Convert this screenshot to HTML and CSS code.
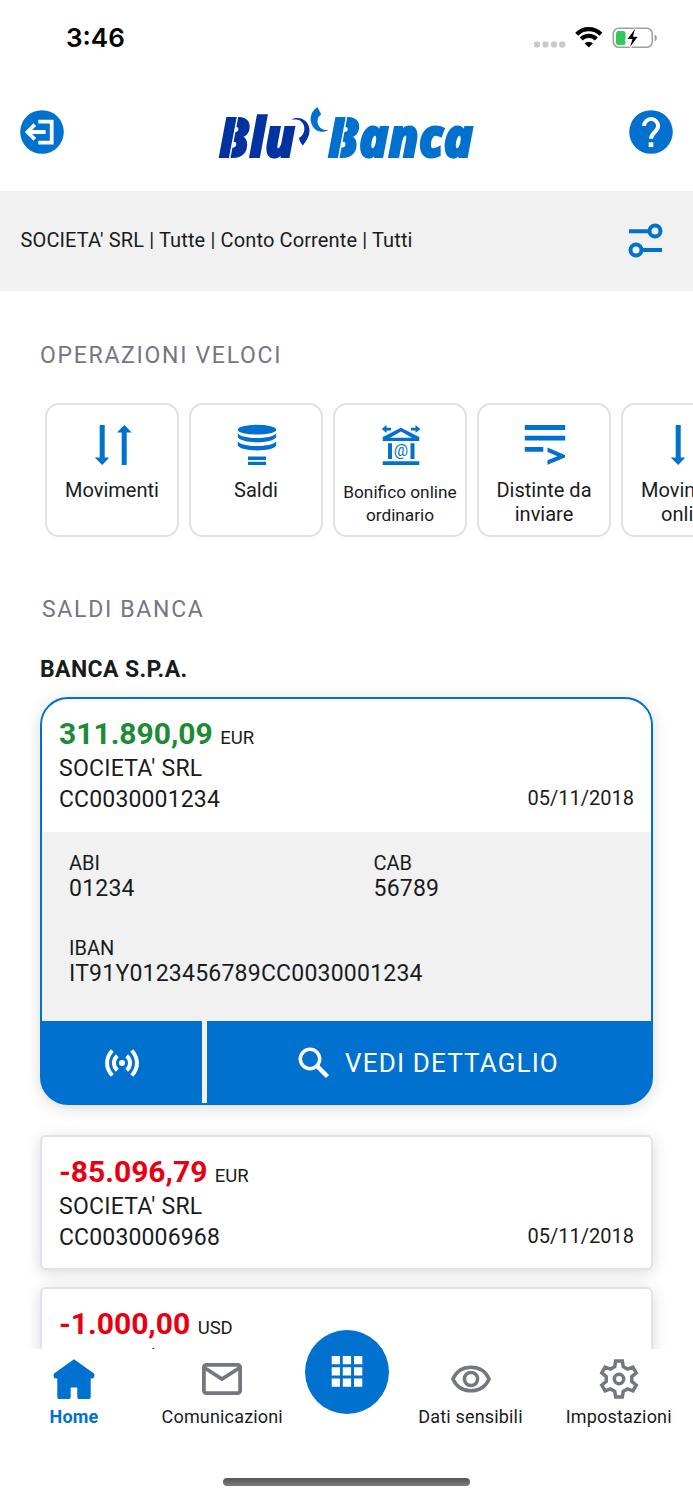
FILE: index.html
```html
<!DOCTYPE html>
<html lang="it">
<head>
  <meta charset="UTF-8" />
  <title>Blu Banca</title>
  <link rel="stylesheet" href="styles.css">
</head>
<body>
  <div class="status-bar">
    <span class="time">3:46</span>
    <svg class="status-icons" width="124" height="24" viewBox="0 0 124 24">
      <g fill="#c8c8c8">
        <rect x="0" y="15.5" width="6" height="6" rx="2" />
        <rect x="8.5" y="15.5" width="6" height="6" rx="2" />
        <rect x="17" y="15.5" width="6" height="6" rx="2" />
        <rect x="25.3" y="15.5" width="6" height="6" rx="2" />
      </g>
      <g fill="none" stroke="#000" stroke-width="4.3">
        <path d="M42.700 8.200a17.200 17.200 0 0 1 24.200 0" />
        <path d="M47.300 13a10.600 10.600 0 0 1 15 0" />
      </g>
      <path d="M50.600 17.200a6.400 6.400 0 0 1 8.400 0L54.800 21.500z" />
      <rect x="79.3" y="2.3" width="39" height="19" rx="5.5" fill="none" stroke="#a0a0a0" stroke-width="1.6" />
      <path d="M120.600 8.500c3 1.300 3 5.700 0 7z" fill="#a0a0a0" />
      <rect x="82" y="5" width="9.500" height="14" rx="2.500" fill="#34c759" />
      <path d="M101 3L93.500 13h5L96 21 103.600 10.700h-4.700z" stroke="#fff" stroke-width="3" />
      <path d="M101 3L93.500 13h5L96 21 103.600 10.700h-4.700z" />
    </svg>
  </div>

  <header>
    <svg width="44" height="44" viewBox="0 0 44 44">
      <circle cx="22" cy="22" r="21.800" fill="#0071ce" />
      <g fill="none" stroke="#fff" stroke-width="3.800">
        <path d="M18.300 11.600h13.400v21H18.300" />
        <path d="M25.600 22H7.500M14.800 14.700L7.500 22l7.300 7.300" />
      </g>
    </svg>
    <svg class="logo" width="260" height="80" viewBox="0 -10 260 80">
      <g font-size="54" stroke-width="2">
        <text x="2" y="51.500" textLength="76" lengthAdjust="spacingAndGlyphs" fill="#0033a0" stroke="#0033a0">Blu</text>
        <text x="111" y="51.500" textLength="145" lengthAdjust="spacingAndGlyphs" fill="#0071ce" stroke="#0071ce">Banca</text>
      </g>
      <!-- stencil cuts -->
      <path d="M20.500 12L12.500 54M129.500 12L121.500 54" stroke="#fff" stroke-width="1.500" />
      <path d="M74.500 14.500C84 10 93 17 92.500 26c-.3 6-3.500 10-6.500 14.500-2-2-3.500-4-4-7.500 6-3 8-13 1-17.500-2-1.300-4.500-1.200-8.500-1z" fill="#0033a0" />
      <path d="M100.500 2c-6.500 4-9 12-5 19 3 5.500 10 7.500 16 4-5 .5-9-1.500-10.500-6-1-4-.5-7 3.200-9.500z" fill="#0071ce" />
    </svg>
    <svg width="44" height="44" viewBox="0 0 44 44">
      <circle cx="22" cy="22" r="21.800" fill="#0071ce" />
      <path d="M15.100 16a7 7 0 0 1 14 0c0 6-7.100 6.500-7.100 12.700" fill="none" stroke="#fff" stroke-width="4" />
      <rect x="19.700" y="32.300" width="4.600" height="4.800" fill="#fff" />
    </svg>
  </header>

  <div class="filter-bar">
    <span>SOCIETA' SRL | Tutte | Conto Corrente | Tutti</span>
    <svg width="36" height="36" viewBox="0 0 36 36" fill="none" stroke="#0071ce" stroke-width="4">
      <path d="M1 9.300h20M14 28h20" />
      <circle cx="27" cy="9" r="5.500" />
      <circle cx="8" cy="28" r="5.500" />
    </svg>
  </div>

  <main>
    <h2 class="quick-title">Operazioni veloci</h2>
    <div class="tiles">
      <div class="tile">
        <svg width="42" height="42" viewBox="0 0 42 42" fill="#0071ce">
          <path d="M7.700 1h5v32.500h4.600L10.200 41 2.800 33.500h4.900zM29.700 41h5V8.500h5L32.400 1l-7.500 7.500h4.800z" />
        </svg>
        <span>Movimenti</span>
      </div>
      <div class="tile">
        <svg width="42" height="42" viewBox="0 0 42 42" fill="#0071ce">
          <ellipse cx="21" cy="5.700" rx="19.200" ry="4.900" />
          <path d="M1.800 9.500c5 6 33.400 6 38.400 0v3.500c-3 7-35.400 7-38.400 0zM1.800 17.500c5 6 33.400 6 38.400 0v4c-3 6.500-35.400 6.500-38.400 0z" />
          <path d="M12 32.500h18V36H12zM12 37.700h18V41H12z" />
        </svg>
        <span>Saldi</span>
      </div>
      <div class="tile small">
        <svg width="42" height="42" viewBox="0 0 42 42" fill="#0071ce">
          <path fill-rule="evenodd" d="M21 3.700L39.300 13v4H2.700v-4zM21 7.500L10 13.700h22z" />
          <path d="M1.700 5L6.500 1v2.700H11v2.700H6.500V9zM40.300 5L35.500 1v2.700H31v2.700h4.500V9zM8 19.300h4V35H8zM30.500 19.300h4V35h-4zM2.700 37.200h36.600V41H2.700z" />
          <text x="21" y="31.500" font-size="16" text-anchor="middle">@</text>
        </svg>
        <span>Bonifico online ordinario</span>
      </div>
      <div class="tile">
        <svg width="42" height="42" viewBox="0 0 42 42" fill="#0071ce">
          <path d="M.8 1h40.400v5H.8zM.8 11.800h40.400v4.700H.8zM.8 23h18.500v4.700H.8z" />
          <path d="M23.500 23.500L41 31v2.500l-17.500 7.300v-4.500l10-4.100-10-4.100z" />
        </svg>
        <span>Distinte da inviare</span>
      </div>
      <div class="tile">
        <svg width="42" height="42" viewBox="0 0 42 42" fill="#0071ce">
          <path d="M7.700 1h5v32.500h4.600L10.200 41 2.800 33.500h4.900zM29.700 41h5V8.500h5L32.400 1l-7.500 7.500h4.800z" />
        </svg>
        <span>Movimenti online</span>
      </div>
    </div>

    <h2 class="balance-title">Saldi banca</h2>
    <h3>BANCA S.P.A.</h3>

    <div class="account open">
      <div class="summary">
        <div>
          <p class="amount positive">311.890,09 <small>EUR</small></p>
          <p>SOCIETA' SRL</p>
          <p class="number">CC0030001234</p>
        </div>
        <span class="date">05/11/2018</span>
      </div>
      <div class="details">
        <div><label>ABI</label><p>01234</p></div>
        <div><label>CAB</label><p>56789</p></div>
        <div class="iban"><label>IBAN</label><p>IT91Y0123456789CC0030001234</p></div>
      </div>
      <div class="actions">
        <div class="action live">
          <svg width="36" height="32" viewBox="0 0 36 32" fill="none" stroke="#fff">
            <circle cx="18" cy="16" r="3" fill="#fff" stroke="none" />
            <path d="M13.300 8.700c-4.500 4-4.500 10.600 0 14.600M22.700 8.700c4.500 4 4.500 10.600 0 14.600" stroke-width="4" />
            <path d="M8.300 3.500c-7 7.500-7 17.500 0 25M27.700 3.500c7 7.500 7 17.500 0 25" stroke-width="4" />
          </svg>
        </div>
        <div class="action detail">
          <svg width="32" height="32" viewBox="0 0 32 32" fill="none" stroke="#fff">
            <circle cx="12" cy="12" r="9.700" stroke-width="3.500" />
            <path d="M18.500 18.500L29.500 29.500" stroke-width="4.500" />
          </svg>
          <span>VEDI DETTAGLIO</span>
        </div>
      </div>
    </div>

    <div class="account">
      <div class="summary">
        <div>
          <p class="amount negative">-85.096,79 <small>EUR</small></p>
          <p>SOCIETA' SRL</p>
          <p class="number">CC0030006968</p>
        </div>
        <span class="date">05/11/2018</span>
      </div>
    </div>

    <div class="account">
      <div class="summary">
        <div>
          <p class="amount negative">-1.000,00 <small>USD</small></p>
          <p>SOCIETA' SRL</p>
        </div>
      </div>
    </div>
  </main>

  <nav>
    <div class="tab active">
      <svg width="42" height="42" viewBox="0 0 42 42" fill="#0071ce">
        <path d="M21 1.300L41 15.500c1 1.500.3 5-1.500 5H37.700v18.800c0 1-.7 1.700-1.700 1.700H26c-1 0-1.700-.7-1.700-1.700V29.500h-6.600v9.800c0 1-.7 1.700-1.700 1.700H6c-1 0-1.700-.7-1.700-1.700V20.500H2.500c-1.800 0-2.500-3.500-1.500-5z" />
      </svg>
      <span>Home</span>
    </div>
    <div class="tab">
      <svg width="42" height="42" viewBox="0 0 42 42" fill="none" stroke="#747680" stroke-width="3.800">
        <rect x="2.900" y="6.900" width="36.200" height="28.200" rx="2.500" />
        <path d="M3 9.500l18 11.500L39 9.500" />
      </svg>
      <span>Comunicazioni</span>
    </div>
    <div class="menu-btn">
      <svg width="32" height="32" viewBox="0 0 32 32" fill="#fff">
        <path d="M.7 0h8.300v8.300H.7zM11.800 0h8.300v8.300h-8.300zM23 0h8.300v8.300H23zM.7 11.300h8.300v8.300H.7zM11.800 11.300h8.300v8.300h-8.300zM23 11.300h8.300v8.300H23zM.7 22.500h8.300v8.300H.7zM11.800 22.500h8.300v8.300h-8.300zM23 22.500h8.300v8.300H23z" />
      </svg>
    </div>
    <div class="tab">
      <svg width="42" height="42" viewBox="0 0 42 42" fill="none" stroke="#747680" stroke-width="3.500">
        <path d="M2.900 21C6.500 13 13 9.200 21 9.200S35.500 13 39.100 21C35.500 29 29 32.800 21 32.800S6.500 29 2.900 21z" />
        <circle cx="21" cy="21" r="6.600" />
      </svg>
      <span>Dati sensibili</span>
    </div>
    <div class="tab">
      <svg width="42" height="42" viewBox="-21 -21 42 42" fill="none" stroke="#747680" stroke-width="3.500">
        <path d="M-3.300-18H3.300L4.300-12.300 8.500-9.900 13.900-11.900 17.200-6.100 12.800-2.400V2.400L17.200 6.100 13.900 11.900 8.500 9.900 4.300 12.300 3.300 18H-3.300L-4.300 12.300-8.500 9.900-13.900 11.900-17.200 6.100-12.800 2.400V-2.400L-17.200-6.100-13.900-11.900-8.500-9.900-4.300-12.300z" />
        <circle cx="0" cy="0" r="4.700" />
      </svg>
      <span>Impostazioni</span>
    </div>
    <div class="home-indicator"></div>
  </nav>
</body>
</html>
```
FILE: styles.css
```css
:root {
  --blue: #0071ce;
  --grey-bg: #f1f1f1;
  --text: #191c1c;
  --muted: #747680;
  --line: #e0e2ec;
}

* {
  box-sizing: border-box;
}

body {
  margin: 0;
  height: 1500px;
  overflow: hidden;
  display: flex;
  flex-direction: column;
  background: #fff;
  color: var(--text);
  font-family: Roboto, 'Liberation Sans', sans-serif;
}

svg {
  display: block;
  flex-shrink: 0;
}

p, h2, h3 {
  margin: 0;
}

.status-bar {
  height: 76px;
  flex-shrink: 0;
  display: flex;
  justify-content: space-between;
  align-items: center;
  padding: 0 35px 0 66px;
}

.time {
  font: 600 26px/30px Inter, sans-serif;
  color: #000;
}

header {
  height: 115px;
  flex-shrink: 0;
  display: flex;
  justify-content: space-between;
  align-items: center;
  padding: 0 20px 3px;
}

.logo {
  margin-top: 6px;
}

.logo text {
  font-family: 'Open Sans', sans-serif;
  font-weight: 800;
  font-style: italic;
}

.filter-bar {
  height: 100px;
  flex-shrink: 0;
  display: flex;
  justify-content: space-between;
  align-items: center;
  padding: 0 29px 3px 20.500px;
  background: var(--grey-bg);
  font-size: 20px;
  letter-spacing: 0.130px;
}

main {
  flex: 1;
  min-height: 0;
  overflow: hidden;
  padding: 50px 40px 0;
}

h2 {
  font-size: 23px;
  line-height: 30px;
  font-weight: 400;
  letter-spacing: 1.700px;
  color: var(--muted);
  text-transform: uppercase;
}

.balance-title {
  margin: 58px 0 0 2px;
}

h3 {
  margin-top: 30px;
  font-size: 23px;
  line-height: 30px;
  font-weight: 700;
  letter-spacing: 0.400px;
}

.tiles {
  display: flex;
  gap: 10px;
  margin: 32px 0 0 5px;
}

.tile {
  width: 134px;
  height: 134px;
  flex-shrink: 0;
  display: flex;
  flex-direction: column;
  align-items: center;
  padding-top: 19px;
  border: 2px solid var(--line);
  border-radius: 14px;
  font-size: 20px;
  line-height: 23.500px;
  text-align: center;
}

.tile svg {
  margin: 0 0 13px 2px;
}

.tile.small {
  font-size: 17.250px;
}

.tile.small span {
  position: relative;
  top: 1.500px;
}

.account {
  margin-bottom: 17px;
  border: 2px solid var(--line);
  border-radius: 6px;
  background: #fff;
  box-shadow: 0 3px 16px rgba(0, 0, 0, 0.15);
}

.account.open {
  margin: 12px 0 30px;
  border-color: var(--blue);
  border-radius: 28px;
}

.summary {
  display: flex;
  justify-content: space-between;
  align-items: flex-end;
  padding: 16px 17px 15px;
  font-size: 23px;
  line-height: 31px;
  letter-spacing: 0.250px;
}

.open .summary {
  padding-bottom: 17px;
}

.amount {
  font-size: 30px;
  line-height: 38px;
  font-weight: 700;
  letter-spacing: 0;
}

.amount small {
  font-size: 18.500px;
  line-height: 1;
  font-weight: 400;
  color: var(--text);
}

.positive { color: #1f8a35; }
.negative { color: #e60012; }

.date {
  font-size: 20px;
  line-height: 34px;
  letter-spacing: 0;
}

.number {
  letter-spacing: 0.150px;
}

.details {
  display: grid;
  grid-template-columns: 304.500px 1fr;
  row-gap: 33px;
  height: 189px;
  padding: 18px 0 34px 27px;
  background: var(--grey-bg);
  font-size: 23px;
  line-height: 26px;
  letter-spacing: 0.220px;
}

.details label {
  display: block;
  font-size: 20px;
  letter-spacing: 0;
}

.iban {
  grid-column: 1 / 3;
}

.actions {
  display: flex;
  height: 83px;
  margin: 0 -1px -1px;
  background: var(--blue);
  border-radius: 0 0 27px 27px;
}

.action {
  display: flex;
  align-items: center;
  justify-content: center;
  height: 82px;
  padding-top: 1px;
  color: #fff;
  font-size: 26px;
}

.live {
  width: 166px;
  border-right: 5px solid var(--grey-bg);
}

.detail {
  flex: 1;
  gap: 15px;
  padding-right: 2px;
  letter-spacing: 1.150px;
}

nav {
  height: 151px;
  flex-shrink: 0;
  display: grid;
  grid-template-columns: 148px 148.500px 100px 148px 148.500px;
  align-content: start;
  position: relative;
  background: #fff;
}

.tab {
  display: flex;
  flex-direction: column;
  align-items: center;
  padding-top: 9px;
  font-size: 18px;
  line-height: 24px;
  letter-spacing: 0.170px;
}

.tab span {
  margin-top: 5px;
}

.tab.active {
  color: var(--blue);
  font-weight: 700;
}

.menu-btn {
  width: 84px;
  height: 84px;
  margin: -19px auto 0;
  display: flex;
  align-items: center;
  justify-content: center;
  border-radius: 50%;
  background: var(--blue);
}

.home-indicator {
  position: absolute;
  left: 223px;
  bottom: 14px;
  width: 247px;
  height: 8px;
  border-radius: 4px;
  background: linear-gradient(#555, #7c7c7c);
}
```
